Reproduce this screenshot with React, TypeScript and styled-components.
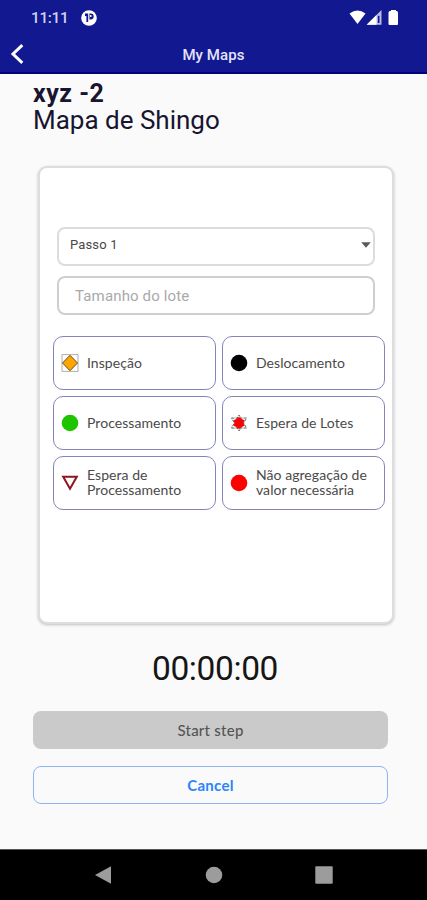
import React from 'react';
import styled, { createGlobalStyle } from 'styled-components';

const GlobalStyle = createGlobalStyle`
  * { box-sizing: border-box; }
  body { margin: 0; background: #fafafa; }
  button { font: inherit; margin: 0; cursor: pointer; }
`;

const Screen = styled.div`
  width: 427px;
  height: 900px;
  display: flex;
  flex-direction: column;
  overflow: hidden;
  background: #fafafa;
  font-family: Roboto, sans-serif;
  color: #17152f;
`;

const Header = styled.header`
  height: 74px;
  flex: none;
  background: #12188f;
  border-bottom: 2px solid #02027c;
`;

const StatusBar = styled.div`
  height: 36px;
  padding: 0 28px 0 31px;
  display: flex;
  align-items: center;
  justify-content: space-between;
`;

const StatusGroup = styled.div`
  display: flex;
  align-items: center;
`;

const Clock = styled.span`
  width: 50px;
  font-size: 15.5px;
  line-height: 20px;
  font-weight: 500;
  letter-spacing: -0.4px;
  color: #cfd0f0;
`;

const NavBar = styled.div`
  height: 36px;
  display: grid;
  grid-template-columns: 40px 1fr 40px;
  align-items: center;
`;

const BackButton = styled.button`
  display: flex;
  padding: 0 0 0 10px;
  border: 0;
  background: none;
`;

const NavTitle = styled.span`
  text-align: center;
  padding-top: 2px;
  font-size: 15px;
  line-height: 20px;
  font-weight: 500;
  letter-spacing: 0.1px;
  color: #e2e3fa;
`;

const Body = styled.main`
  height: 775px;
  flex: none;
  padding: 7px 39px 0 33px;
  display: flex;
  flex-direction: column;
`;

const MapName = styled.h1`
  margin: 0;
  font-size: 25px;
  line-height: 26px;
  font-weight: 700;
  letter-spacing: 0.5px;
`;

const MapType = styled.h2`
  margin: 0;
  font-size: 26px;
  line-height: 26px;
  font-weight: 400;
  letter-spacing: 0;
`;

const Card = styled.section`
  width: 356px;
  height: 458px;
  margin: 33px 0 0 5px;
  padding: 59px 7px 0 13px;
  border: 2px solid #dcddde;
  border-radius: 9px;
  background: #fff;
  box-shadow: 0 1px 3px rgba(0, 0, 0, 0.24);
`;

const Fields = styled.div`
  display: flex;
  flex-direction: column;
  gap: 10px;
  margin: 0 10px 0 4px;
`;

const Field = styled.div<{ $placeholder?: boolean }>`
  height: 39px;
  display: flex;
  align-items: center;
  justify-content: space-between;
  border: 2px solid ${p => (p.$placeholder ? '#cfcfcf' : '#dadcde')};
  border-radius: 8px;
  padding: ${p => (p.$placeholder ? '0 2px 0 16px' : '0 2px 4px 11px')};
  font-size: ${p => (p.$placeholder ? 15 : 13)}px;
  letter-spacing: ${p => (p.$placeholder ? 0.15 : 0.15)}px;
  color: ${p => (p.$placeholder ? '#a9a9a9' : '#484848')};
`;

const Options = styled.div`
  margin-top: 21px;
  display: grid;
  grid-template-columns: 163px 163px;
  grid-auto-rows: 54px;
  gap: 6px;
`;

const Option = styled.button`
  display: flex;
  align-items: center;
  gap: 8px;
  padding: 0 0 0 7px;
  border: 1.4px solid #8585bb;
  border-radius: 10px;
  background: #fff;
  text-align: left;
  font-family: Lato, sans-serif;
  font-size: 14px;
  line-height: 15px;
  letter-spacing: 0.05px;
  color: #4a4a4a;
`;

const OptionLabel = styled.span`
  white-space: pre-line;
  padding-bottom: 2px;
`;

const Timer = styled.div`
  margin-top: 24px;
  padding-left: 9px;
  height: 42px;
  text-align: center;
  font-size: 33.5px;
  line-height: 42px;
  letter-spacing: -0.4px;
  color: #161616;
`;

const Actions = styled.div`
  margin-top: 21px;
  display: flex;
  flex-direction: column;
  gap: 17px;
`;

const Action = styled.button<{ $outline?: boolean }>`
  height: 38px;
  border-radius: 8px;
  border: ${p => (p.$outline ? '1.5px solid #8eb4f3' : '0')};
  background: ${p => (p.$outline ? '#fafafa' : '#cacaca')};
  color: ${p => (p.$outline ? '#2b84fb' : '#555')};
  font-family: Lato, sans-serif;
  font-size: 15px;
  font-weight: ${p => (p.$outline ? 700 : 500)};
  letter-spacing: 0.25px;
`;

const SystemNav = styled.nav`
  flex: 1;
  display: grid;
  grid-template-columns: repeat(3, 110px);
  justify-content: center;
  place-items: center;
  background: #000;
  border-top: 1px solid #555;
`;

type Kind = 'inspection' | 'move' | 'process' | 'batch' | 'wait' | 'waste';

const OptionIcon = ({ kind }: { kind: Kind }) => (
  <svg width="18" height="18" viewBox="0 0 18 18">
    {kind === 'inspection' && (
      <>
        <rect x="1" y="0.7" width="16" height="16.6" fill="none" stroke="#9a9a9a" strokeWidth="0.8" />
        <path d="M9 1.3 16.5 9 9 16.7 1.5 9Z" fill="#ffa500" stroke="#6b4b14" strokeWidth="1" />
      </>
    )}
    {kind === 'move' && <circle cx="9" cy="9" r="8.3" fill="#000" />}
    {kind === 'process' && <circle cx="9" cy="9" r="8.3" fill="#1fc400" />}
    {kind === 'waste' && <circle cx="9" cy="9" r="8.3" fill="#ff0000" />}
    {kind === 'wait' && (
      <path d="M2.2 2.7H15.8L9 14.7Z" fill="#fff" stroke="#8f161b" strokeWidth="2" />
    )}
    {kind === 'batch' && (
      <>
        <path
          d="M1.5 4H16.5L9 17ZM1.5 14H16.5L9 1Z"
          fill="none"
          stroke="#666"
          strokeWidth="1"
          strokeDasharray="3 1"
        />
        <path d="M9 3 11.5 5 14.6 6.2 13.2 9 14.6 11.8 11.5 13 9 15 6.5 13 3.4 11.8 4.8 9 3.4 6.2 6.5 5Z" fill="#f00" />
      </>
    )}
  </svg>
);

const options: { kind: Kind; label: string }[] = [
  { kind: 'inspection', label: 'Inspeção' },
  { kind: 'move', label: 'Deslocamento' },
  { kind: 'process', label: 'Processamento' },
  { kind: 'batch', label: 'Espera de Lotes' },
  { kind: 'wait', label: 'Espera de\nProcessamento' },
  { kind: 'waste', label: 'Não agregação de\nvalor necessária' },
];

export default function App() {
  return (
    <Screen>
      <GlobalStyle />
      <Header>
        <StatusBar>
          <StatusGroup>
            <Clock>11:11</Clock>
            <svg width="16" height="16" viewBox="0 0 16 16">
              <circle cx="8" cy="8" r="7.8" fill="#fff" />
              <path d="M4 3.6H7.2V12H5.4V6H4ZM8.4 3.6h1.4a2.9 2.9 0 0 1 0 5.8H8.4Z" fill="#12188f" />
              <circle cx="9.7" cy="6" r="1" fill="#fff" />
            </svg>
          </StatusGroup>
          <svg width="50" height="18" viewBox="0 0 50 18">
            <path d="M.5 4.5Q8.5-1.7 16.5 4.5L8.5 15Z" fill="#fff" />
            <path d="M17.7 15.8 32.5 1V15.8Z" fill="#b9bce7" />
            <path d="M17.7 15.8 27.5 6V15.8Z" fill="#fff" />
            <path d="M28.8 6.8h1.7V14h-1.7Z" fill="#12188f" />
            <path d="M39.5 15V3.6Q39.5 2 41 2h1V1h5v1h.5Q49 2 49 3.6V15q0 1-1 1h-7.5q-1 0-1-1Z" fill="#fff" />
          </svg>
        </StatusBar>
        <NavBar>
          <BackButton aria-label="Back">
            <svg width="15" height="20" viewBox="0 0 15 20">
              <path d="M12.3 1.2 3 10l9.3 8.8" fill="none" stroke="#fff" strokeWidth="3" />
            </svg>
          </BackButton>
          <NavTitle>My Maps</NavTitle>
        </NavBar>
      </Header>
      <Body>
        <MapName>xyz -2</MapName>
        <MapType>Mapa de Shingo</MapType>
        <Card>
          <Fields>
            <Field>
              Passo 1
              <svg width="10" height="6" viewBox="0 0 10 6">
                <path d="M.2.3H9.8L5 5.7Z" fill="#5a5a5a" />
              </svg>
            </Field>
            <Field $placeholder>Tamanho do lote</Field>
          </Fields>
          <Options>
            {options.map(o => (
              <Option key={o.kind}>
                <OptionIcon kind={o.kind} />
                <OptionLabel>{o.label}</OptionLabel>
              </Option>
            ))}
          </Options>
        </Card>
        <Timer>00:00:00</Timer>
        <Actions>
          <Action>Start step</Action>
          <Action $outline>Cancel</Action>
        </Actions>
      </Body>
      <SystemNav>
        <svg width="18" height="18" viewBox="0 0 18 18">
          <path d="M0 9 16 .2V17.8Z" fill="#9c9c9c" />
        </svg>
        <svg width="18" height="18" viewBox="0 0 18 18">
          <circle cx="9" cy="9" r="8.3" fill="#9c9c9c" />
        </svg>
        <svg width="18" height="18" viewBox="0 0 18 18">
          <rect x=".3" y=".3" width="17.4" height="17.4" rx="1" fill="#9c9c9c" />
        </svg>
      </SystemNav>
    </Screen>
  );
}
